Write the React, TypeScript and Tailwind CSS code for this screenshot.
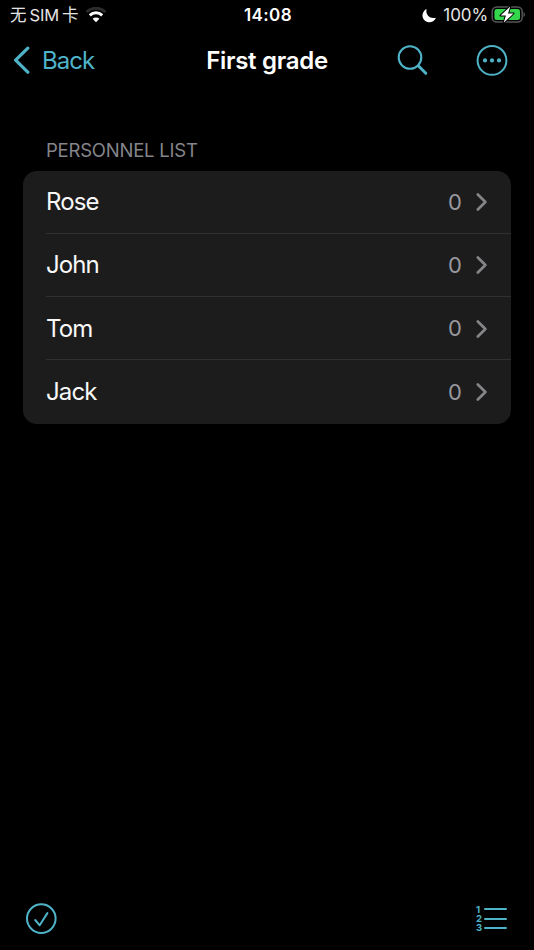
const people = [
  { name: "Rose", count: 0 },
  { name: "John", count: 0 },
  { name: "Tom", count: 0 },
  { name: "Jack", count: 0 },
];

function WifiIcon() {
  return (
    <svg width="22" height="16" viewBox="0 0 22 16" fill="none">
      <path d="M1.6 5a13.6 13.6 0 0 1 18.8 0" stroke="#2c2c2c" strokeWidth="3" />
      <path d="M4.8 8.3a9 9 0 0 1 12.4 0" stroke="#fff" strokeWidth="3" />
      <path d="M11 15.2 7.6 11.8a4.9 4.9 0 0 1 6.8 0Z" fill="#fff" />
    </svg>
  );
}

function MoonIcon() {
  return (
    <svg width="15" height="15" viewBox="0 0 15 15">
      <path d="M4.6 1.1C3.4 6.2 7.2 11.2 13.9 9.7A6.9 6.9 0 1 1 4.6 1.1Z" fill="#fff" />
    </svg>
  );
}

function BatteryIcon() {
  return (
    <svg width="35" height="18" viewBox="0 0 35 18">
      <rect x="1.2" y="0.9" width="30" height="15.2" rx="4.6" fill="none" stroke="#565656" strokeWidth="1.5" />
      <path d="M32.5 6c1.9.7 1.9 4.3 0 5Z" fill="#565656" />
      <rect x="3.4" y="3.1" width="25.6" height="10.8" rx="2.5" fill="#32d74b" />
      <path
        d="M19.3.4 9.6 9.6h5.3l-2.2 7.2 9.8-9.4H17Z"
        fill="#fff"
        stroke="#000"
        strokeWidth="2"
        strokeLinejoin="round"
        paintOrder="stroke"
      />
    </svg>
  );
}

function StatusBar() {
  return (
    <div className="grid h-[30px] grid-cols-3 items-center pl-[10px] pr-[8px]">
      <div className="flex items-center">
        <span className="w-[75px] whitespace-nowrap font-['Inter','Noto_Sans_CJK_SC',sans-serif] text-[16.5px] leading-[30px] tracking-[-0.1px] text-[#e4e4e4]">
          无<span className="mx-[3px]">SIM</span>卡
        </span>
        <WifiIcon />
      </div>
      <span className="text-center text-[17px] font-semibold leading-[30px] tracking-[0.4px]">14:08</span>
      <div className="flex items-center justify-end">
        <MoonIcon />
        <span className="ml-[6px] mr-[3px] pt-px text-[17px] tracking-[-0.1px] text-[#e4e4e4]">100%</span>
        <BatteryIcon />
      </div>
    </div>
  );
}

function NavBar() {
  return (
    <header className="grid h-[60px] grid-cols-3 items-center pl-[12px] pr-[25px]">
      <button className="flex items-center text-[#4fb3c8]">
        <svg width="19" height="28" viewBox="0 0 19 28" fill="none">
          <path d="M15.8 2.2 3.6 14.2l12.2 12" stroke="currentColor" strokeWidth="3.2" strokeLinecap="round" strokeLinejoin="round" />
        </svg>
        <span className="ml-[11px] pt-px text-[24px] tracking-[-0.95px]">Back</span>
      </button>
      <h1 className="ml-[13px] whitespace-nowrap pt-px text-center text-[24px] font-semibold tracking-[-0.3px]">First grade</h1>
      <div className="flex items-center justify-end gap-[46px] text-[#4fb3c8]">
        <svg width="32" height="32" viewBox="0 0 32 32" fill="none" stroke="currentColor" strokeLinecap="round">
          <circle cx="13" cy="13.5" r="11.3" strokeWidth="2.1" />
          <path d="m21.5 22 7.3 7.3" strokeWidth="3" />
        </svg>
        <svg width="34" height="34" viewBox="0 0 34 34" fill="none">
          <circle cx="17" cy="17.4" r="14.4" stroke="currentColor" strokeWidth="2" />
          <g fill="currentColor">
            <circle cx="10" cy="17.4" r="2.1" />
            <circle cx="17" cy="17.4" r="2.1" />
            <circle cx="24" cy="17.4" r="2.1" />
          </g>
        </svg>
      </div>
    </header>
  );
}

function PersonRow({ name, count, last }: { name: string; count: number; last: boolean }) {
  return (
    <li className="h-[63.25px] pl-[23px]">
      <div className={`flex h-full items-center pr-[23px] pt-px ${last ? "" : "border-b border-[#303032]"}`}>
        <span className="flex-1 text-[24px] tracking-[-0.9px] text-[#f8f8f8]">{name}</span>
        <span className="text-[22px] text-[#98989f]">{count}</span>
        <svg className="ml-[13px]" width="13" height="20" viewBox="0 0 13 20" fill="none">
          <path d="M2.8 2.5 10.4 10l-7.6 7.5" stroke="#858589" strokeWidth="2.7" strokeLinecap="round" strokeLinejoin="round" />
        </svg>
      </div>
    </li>
  );
}

function Toolbar() {
  return (
    <footer className="flex h-[63px] items-center justify-between pl-[25px] pr-[27px] text-[#4fb3c8]">
      <svg width="33" height="33" viewBox="0 0 33 33" fill="none" stroke="currentColor" strokeWidth="2">
        <circle cx="16.3" cy="16.6" r="14.3" />
        <path d="m10.2 18 4.5 5.3 7.7-12.2" strokeLinecap="round" strokeLinejoin="round" />
      </svg>
      <div className="flex flex-col">
        {[1, 2, 3].map((n) => (
          <div key={n} className="flex h-[9.2px] items-center">
            <span className="w-[8px] text-[9.5px] font-bold leading-none">{n}</span>
            <span className="h-[2px] w-[23px] rounded-full bg-current" />
          </div>
        ))}
      </div>
    </footer>
  );
}

export default function App() {
  return (
    <div className="flex h-[950px] w-[534px] flex-col bg-black font-['Inter',sans-serif] text-white">
      <StatusBar />
      <NavBar />
      <main className="flex-1 px-[23px] pt-[46px]">
        <h2 className="pl-[23px] text-[18.5px] leading-7 tracking-[-0.22px] text-[#85858b]">PERSONNEL LIST</h2>
        <ul className="mt-[6.5px] rounded-[14px] bg-[#1c1c1c]">
          {people.map((person, i) => (
            <PersonRow key={person.name} name={person.name} count={person.count} last={i === people.length - 1} />
          ))}
        </ul>
      </main>
      <Toolbar />
    </div>
  );
}
